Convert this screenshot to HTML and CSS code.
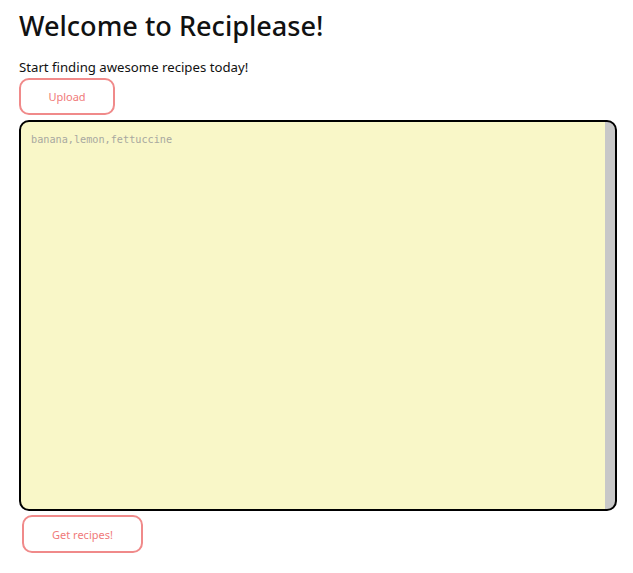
FILE: index.html
```html
<!DOCTYPE html>
<html>
<head>
<meta charset="utf-8">
<link rel="stylesheet" href="styles.css">
</head>
<body>
<div class="page">
  <h1 class="title">Welcome to Reciplease!</h1>
  <p class="lead">Start finding awesome recipes today!</p>
  <button class="btn btn-upload">Upload</button>
  <textarea class="ingredients" placeholder="banana,lemon,fettuccine"></textarea>
  <button class="btn btn-get">Get recipes!</button>
</div>
</body>
</html>
```
FILE: styles.css
```css
html, body {
  margin: 0;
  padding: 0;
  background: #ffffff;
}
.page {
  padding: 8px 16px 0 19px;
  display: flex;
  flex-direction: column;
  align-items: flex-start;
  font-family: "Noto Sans", "Open Sans", sans-serif;
  color: #111;
}
.title {
  margin: 0;
  font-size: 27.1px;
  font-weight: 500;
  line-height: 36px;
  letter-spacing: 0;
}
.lead {
  margin: 14px 0 0 0;
  font-size: 13.2px;
  line-height: 19px;
}
.btn {
  background: #fff;
  border: 2px solid #f08a8a;
  border-radius: 10px;
  color: #f07a7a;
  font-family: "Noto Sans", "Open Sans", sans-serif;
  font-size: 11px;
  cursor: pointer;
}
.btn-upload {
  margin-top: 1px;
  width: 96px;
  height: 37px;
}
.ingredients {
  box-sizing: border-box;
  margin-top: 5px;
  width: 598px;
  height: 391px;
  border: 2px solid #000;
  border-radius: 10px;
  background: linear-gradient(to left, #c8c8c8 10px, #f9f7c8 10px);
  font-family: "DejaVu Sans Mono", monospace;
  font-size: 10.2px;
  padding: 12px 10px 10px 10px;
  resize: none;
  outline: none;
}
.ingredients::placeholder {
  color: #a8a8a0;
}
.btn-get {
  margin-top: 4px;
  margin-left: 3px;
  width: 121px;
  height: 38px;
}
```
